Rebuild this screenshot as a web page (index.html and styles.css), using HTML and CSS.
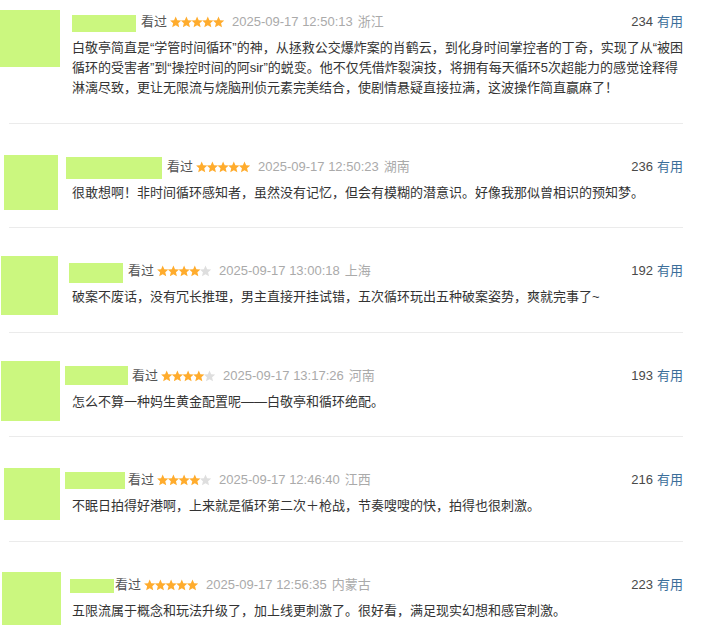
FILE: index.html
```html
<!DOCTYPE html>
<html lang="zh-CN">
<head>
    <meta charset="UTF-8">
    <meta name="viewport" content="width=device-width, initial-scale=1.0">
    <title>短评</title>
    <link rel="stylesheet" href="styles.css">
</head>
<body>
    <!-- star shape used by every rating -->
    <svg class="sprite" aria-hidden="true">
        <symbol id="star" viewBox="0 0 12 12">
            <polygon points="6,0.3 7.7,4.2 11.9,4.5 8.7,7.3 9.7,11.6 6,9.4 2.3,11.6 3.3,7.3 0.1,4.5 4.3,4.2"/>
        </symbol>
    </svg>

    <div class="comments">
        <div class="comment u1">
            <div class="avatar-col"><div class="avatar"></div></div>
            <div class="body">
                <div class="meta">
                    <span class="name"></span>
                    <span class="status">看过</span>
                    <svg class="stars" width="54" height="12" viewBox="0 0 54 12">
                        <use href="#star" class="on" x="0" width="11.4" height="12"/>
                        <use href="#star" class="on" x="10.7" width="11.4" height="12"/>
                        <use href="#star" class="on" x="21.4" width="11.4" height="12"/>
                        <use href="#star" class="on" x="32.1" width="11.4" height="12"/>
                        <use href="#star" class="on" x="42.8" width="11.4" height="12"/>
                    </svg>
                    <span class="time">2025-09-17 12:50:13</span>
                    <span class="place">浙江</span>
                    <span class="votes">234<span class="useful">有用</span></span>
                </div>
                <p class="text">白敬亭简直是“学管时间循环”的神，从拯救公交爆炸案的肖鹤云，到化身时间掌控者的丁奇，实现了从“被困循环的受害者”到“操控时间的阿sir”的蜕变。他不仅凭借炸裂演技，将拥有每天循环5次超能力的感觉诠释得淋漓尽致，更让无限流与烧脑刑侦元素完美结合，使剧情悬疑直接拉满，这波操作简直赢麻了！</p>
            </div>
        </div>
        <div class="divider"></div>

        <div class="comment u2">
            <div class="avatar-col"><div class="avatar"></div></div>
            <div class="body">
                <div class="meta">
                    <span class="name"></span>
                    <span class="status">看过</span>
                    <svg class="stars" width="54" height="12" viewBox="0 0 54 12">
                        <use href="#star" class="on" x="0" width="11.4" height="12"/>
                        <use href="#star" class="on" x="10.7" width="11.4" height="12"/>
                        <use href="#star" class="on" x="21.4" width="11.4" height="12"/>
                        <use href="#star" class="on" x="32.1" width="11.4" height="12"/>
                        <use href="#star" class="on" x="42.8" width="11.4" height="12"/>
                    </svg>
                    <span class="time">2025-09-17 12:50:23</span>
                    <span class="place">湖南</span>
                    <span class="votes">236<span class="useful">有用</span></span>
                </div>
                <p class="text">很敢想啊！非时间循环感知者，虽然没有记忆，但会有模糊的潜意识。好像我那似曾相识的预知梦。</p>
            </div>
        </div>
        <div class="divider"></div>

        <div class="comment u3">
            <div class="avatar-col"><div class="avatar"></div></div>
            <div class="body">
                <div class="meta">
                    <span class="name"></span>
                    <span class="status">看过</span>
                    <svg class="stars" width="54" height="12" viewBox="0 0 54 12">
                        <use href="#star" class="on" x="0" width="11.4" height="12"/>
                        <use href="#star" class="on" x="10.7" width="11.4" height="12"/>
                        <use href="#star" class="on" x="21.4" width="11.4" height="12"/>
                        <use href="#star" class="on" x="32.1" width="11.4" height="12"/>
                        <use href="#star" class="off" x="42.8" width="11.4" height="12"/>
                    </svg>
                    <span class="time">2025-09-17 13:00:18</span>
                    <span class="place">上海</span>
                    <span class="votes">192<span class="useful">有用</span></span>
                </div>
                <p class="text">破案不废话，没有冗长推理，男主直接开挂试错，五次循环玩出五种破案姿势，爽就完事了~</p>
            </div>
        </div>
        <div class="divider"></div>

        <div class="comment u4">
            <div class="avatar-col"><div class="avatar"></div></div>
            <div class="body">
                <div class="meta">
                    <span class="name"></span>
                    <span class="status">看过</span>
                    <svg class="stars" width="54" height="12" viewBox="0 0 54 12">
                        <use href="#star" class="on" x="0" width="11.4" height="12"/>
                        <use href="#star" class="on" x="10.7" width="11.4" height="12"/>
                        <use href="#star" class="on" x="21.4" width="11.4" height="12"/>
                        <use href="#star" class="on" x="32.1" width="11.4" height="12"/>
                        <use href="#star" class="off" x="42.8" width="11.4" height="12"/>
                    </svg>
                    <span class="time">2025-09-17 13:17:26</span>
                    <span class="place">河南</span>
                    <span class="votes">193<span class="useful">有用</span></span>
                </div>
                <p class="text">怎么不算一种妈生黄金配置呢——白敬亭和循环绝配。</p>
            </div>
        </div>
        <div class="divider"></div>

        <div class="comment u5">
            <div class="avatar-col"><div class="avatar"></div></div>
            <div class="body">
                <div class="meta">
                    <span class="name"></span>
                    <span class="status">看过</span>
                    <svg class="stars" width="54" height="12" viewBox="0 0 54 12">
                        <use href="#star" class="on" x="0" width="11.4" height="12"/>
                        <use href="#star" class="on" x="10.7" width="11.4" height="12"/>
                        <use href="#star" class="on" x="21.4" width="11.4" height="12"/>
                        <use href="#star" class="on" x="32.1" width="11.4" height="12"/>
                        <use href="#star" class="off" x="42.8" width="11.4" height="12"/>
                    </svg>
                    <span class="time">2025-09-17 12:46:40</span>
                    <span class="place">江西</span>
                    <span class="votes">216<span class="useful">有用</span></span>
                </div>
                <p class="text">不眠日拍得好港啊，上来就是循环第二次＋枪战，节奏嗖嗖的快，拍得也很刺激。</p>
            </div>
        </div>
        <div class="divider"></div>

        <div class="comment u6">
            <div class="avatar-col"><div class="avatar"></div></div>
            <div class="body">
                <div class="meta">
                    <span class="name"></span>
                    <span class="status">看过</span>
                    <svg class="stars" width="54" height="12" viewBox="0 0 54 12">
                        <use href="#star" class="on" x="0" width="11.4" height="12"/>
                        <use href="#star" class="on" x="10.7" width="11.4" height="12"/>
                        <use href="#star" class="on" x="21.4" width="11.4" height="12"/>
                        <use href="#star" class="on" x="32.1" width="11.4" height="12"/>
                        <use href="#star" class="on" x="42.8" width="11.4" height="12"/>
                    </svg>
                    <span class="time">2025-09-17 12:56:35</span>
                    <span class="place">内蒙古</span>
                    <span class="votes">223<span class="useful">有用</span></span>
                </div>
                <p class="text">五限流属于概念和玩法升级了，加上线更刺激了。很好看，满足现实幻想和感官刺激。</p>
            </div>
        </div>
    </div>
</body>
</html>
```

FILE: styles.css
```css
body {
    margin: 0;
    background-color: #fff;
    font-family: "Liberation Sans", "Noto Sans CJK SC", sans-serif;
    font-size: 13px;
    color: #333;
}
.sprite {
    display: block;
    width: 0;
    height: 0;
    overflow: hidden;
}
.comments {
    padding-right: 18px;
}
.comment {
    display: flex;
    padding: 33px 0 24.5px;
}
.comment:first-child {
    padding-top: 12px;
}
.divider {
    height: 1px;
    margin-left: 9px;
    background-color: #ebebeb;
}
/* avatars are placeholders, they must not push the row taller */
.avatar-col {
    flex: none;
    width: 72px;
    height: 0;
}
.avatar,
.name {
    background-color: #cbf77f;
}
.body {
    flex: 1;
    min-width: 0;
}
.meta {
    display: flex;
    align-items: center;
    height: 20px;
    line-height: 20px;
    color: #555;
    white-space: nowrap;
}
.name {
    flex: none;
    display: block;
}
.stars {
    display: block;
    flex: none;
    margin: 0 8px 0 3px;
}
.stars .on {
    fill: #ffac2d;
}
.stars .off {
    fill: #dedede;
}
.time {
    color: #aaa;
}
.place {
    color: #aaa;
    margin-left: 5px;
}
.votes {
    margin-left: auto;
    color: #494949;
}
.useful {
    color: #3b6e9a;
    margin-left: 4px;
}
.text {
    margin: 6px 0 0;
    line-height: 20px;
    color: #333;
}

/* per-user placeholder sizes */
.u1 .avatar { margin: -2px 0 0 0; width: 60px; height: 57px; }
.u1 .name { margin: 3px 5px 0 0; width: 64px; height: 17px; }
.u2 .avatar { margin: -2px 0 0 4px; width: 54px; height: 55px; }
.u2 .name { margin: 2px 5px 0 -6px; width: 96px; height: 22px; }
.u3 .avatar { margin: -5px 0 0 1px; width: 57px; height: 59px; }
.u3 .name { margin: 4px 5px 0 -3px; width: 54px; height: 20px; }
.u4 .avatar { margin: -5px 0 0 1px; width: 59px; height: 60px; }
.u4 .name { margin: 0 4px 0 -7px; width: 63px; height: 19px; }
.u5 .avatar { margin: -2px 0 0 4px; width: 56px; height: 52px; }
.u5 .name { margin: 0 3px 0 -7px; width: 60px; height: 17px; }
.u6 .avatar { margin: -3px 0 0 2px; width: 59px; height: 53px; }
.u6 .name { margin: 2px 1px 0 -2px; width: 44px; height: 14px; }
```
